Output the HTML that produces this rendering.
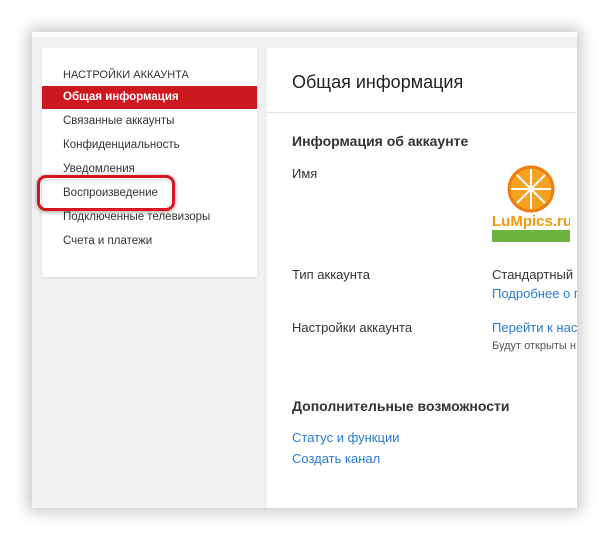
<!DOCTYPE html>
<html><head><meta charset="utf-8">
<style>
*{margin:0;padding:0;box-sizing:border-box}
body{width:609px;height:540px;background:#fff;position:relative;overflow:hidden;font-family:"Liberation Sans",sans-serif}
.shot{position:absolute;left:32px;top:32px;width:545px;height:476px;background:#f1f1f1;border-top:5px solid #fff;box-shadow:0 0 14px 4px rgba(0,0,0,.22);overflow:hidden}
.side{position:absolute;left:10px;top:11px;width:215px;height:229px;background:#fff;box-shadow:0 1px 2px rgba(0,0,0,.1)}
.side div{position:absolute;left:21px;font-size:11.5px;color:#333;white-space:nowrap}
.side .sel{left:0;width:215px;height:23px;background:#cc181e;color:#fff;font-weight:bold;padding-left:21px;line-height:23px}
.main{position:absolute;left:235px;top:11px;width:320px;height:470px;background:#fff}
.main div{position:absolute;white-space:nowrap;color:#333}
.hl{position:absolute;left:37px;top:175px;width:138px;height:36px;border:3px solid #d8141c;border-radius:9px;box-shadow:0 1px 4px rgba(0,0,0,.4),inset 0 0 0 1px #fff,inset 0 1px 3px rgba(0,0,0,.3)}
.blue{color:#2a7ad1!important}
</style></head><body>
<div class="shot">
 <div class="side">
  <div style="top:21px;font-size:11px">НАСТРОЙКИ АККАУНТА</div>
  <div class="sel" style="top:38px">Общая информация</div>
  <div style="top:67px">Связанные аккаунты</div>
  <div style="top:91px">Конфиденциальность</div>
  <div style="top:115px">Уведомления</div>
  <div style="top:139px">Воспроизведение</div>
  <div style="top:163px">Подключенные телевизоры</div>
  <div style="top:187px">Счета и платежи</div>
 </div>
 <div class="main">
  <div style="left:25px;top:24px;font-size:18px;color:#222">Общая информация</div>
  <div style="left:0;top:64px;width:320px;height:1px;background:#e2e2e2"></div>
  <div style="left:25px;top:85px;font-size:14px;font-weight:bold;color:#333">Информация об аккаунте</div>
  <div style="left:25px;top:118px;font-size:13px">Имя</div>
  <svg style="position:absolute;left:225px;top:117px" width="78" height="78" viewBox="0 0 78 78">
   <circle cx="39" cy="24" r="22" fill="#f4a21f" stroke="#ef7d10" stroke-width="3"/>
   <g stroke="#fff" stroke-width="2"><line x1="39" y1="4" x2="39" y2="44"/><line x1="19" y1="24" x2="59" y2="24"/><line x1="25" y1="10" x2="53" y2="38"/><line x1="53" y1="10" x2="25" y2="38"/></g>
   <text x="0" y="61" font-family="Liberation Sans" font-weight="bold" font-size="15" fill="#f19a10">LuMpics.ru</text>
   <rect x="0" y="65" width="78" height="12" fill="#6db33f"/>
  </svg>
  <div style="left:25px;top:219px;font-size:13px">Тип аккаунта</div>
  <div style="left:225px;top:219px;font-size:13px">Стандартный</div>
  <div class="blue" style="left:225px;top:238px;font-size:13px">Подробнее о п</div>
  <div style="left:25px;top:272px;font-size:13px">Настройки аккаунта</div>
  <div class="blue" style="left:225px;top:272px;font-size:13px">Перейти к нас</div>
  <div style="left:225px;top:292px;font-size:11px;color:#555">Будут открыты н</div>
  <div style="left:25px;top:350px;font-size:14px;font-weight:bold;color:#333">Дополнительные возможности</div>
  <div class="blue" style="left:25px;top:382px;font-size:13px">Статус и функции</div>
  <div class="blue" style="left:25px;top:403px;font-size:13px">Создать канал</div>
 </div>
</div>
<div class="hl"></div>
</body></html>
